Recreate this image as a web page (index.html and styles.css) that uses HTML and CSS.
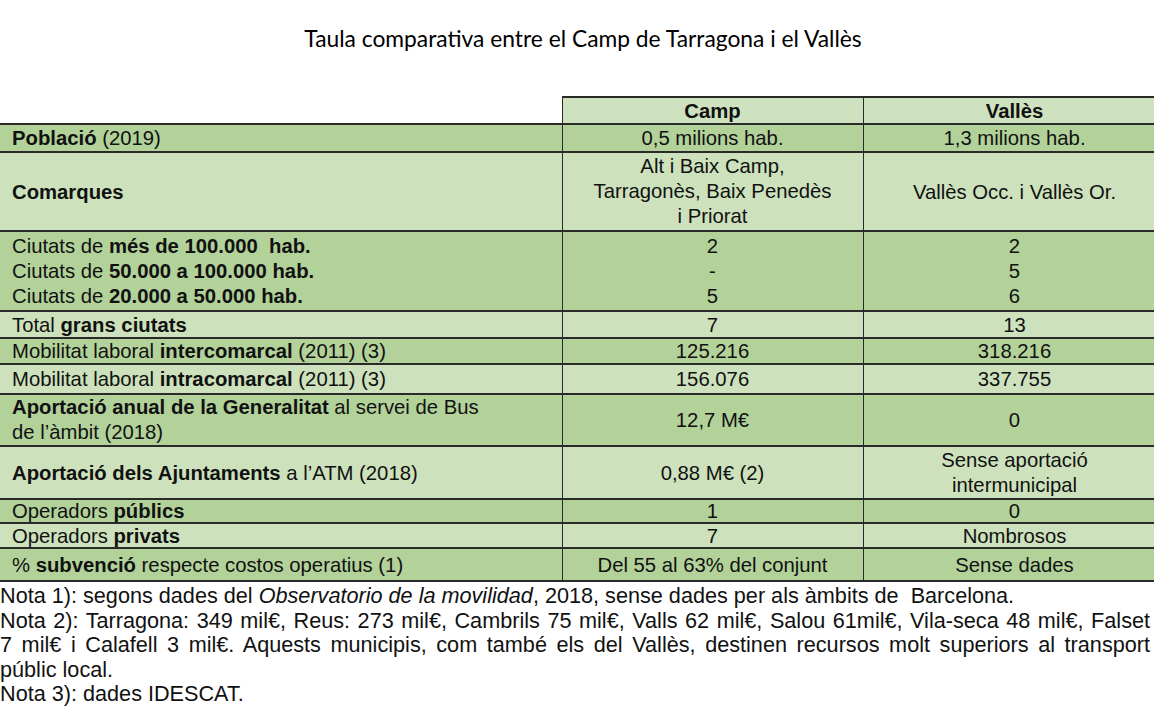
FILE: index.html
```html
<!DOCTYPE html>
<html lang="ca">
<head>
<meta charset="utf-8">
<title>Taula comparativa</title>
<link rel="stylesheet" href="styles.css">
</head>
<body>
<div class="page">
  <h1 class="title">Taula comparativa entre el Camp de Tarragona i el Vallès</h1>
  <table class="cmp">
    <colgroup>
      <col class="c-lbl">
      <col class="c-val">
      <col class="c-val2">
    </colgroup>
    <thead>
      <tr class="r-head">
        <th class="blank"></th>
        <th class="head">Camp</th>
        <th class="head">Vallès</th>
      </tr>
    </thead>
    <tbody>
      <tr class="dark r-28">
        <td class="lbl"><b>Població</b> (2019)</td>
        <td>0,5 milions hab.</td>
        <td>1,3 milions hab.</td>
      </tr>
      <tr class="light r-79">
        <td class="lbl"><b>Comarques</b></td>
        <td class="ml">Alt i Baix Camp,<br>Tarragonès, Baix Penedès<br>i Priorat</td>
        <td>Vallès Occ. i Vallès Or.</td>
      </tr>
      <tr class="dark r-80">
        <td class="lbl ml">Ciutats de <b>més de 100.000&nbsp; hab.</b><br>Ciutats de <b>50.000 a 100.000 hab.</b><br>Ciutats de <b>20.000 a 50.000 hab.</b></td>
        <td class="ml">2<br>-<br>5</td>
        <td class="ml">2<br>5<br>6</td>
      </tr>
      <tr class="light r-27">
        <td class="lbl">Total <b>grans ciutats</b></td>
        <td>7</td>
        <td>13</td>
      </tr>
      <tr class="dark r-26">
        <td class="lbl">Mobilitat laboral <b>intercomarcal</b> (2011) (3)</td>
        <td>125.216</td>
        <td>318.216</td>
      </tr>
      <tr class="light r-30">
        <td class="lbl">Mobilitat laboral <b>intracomarcal</b> (2011) (3)</td>
        <td>156.076</td>
        <td>337.755</td>
      </tr>
      <tr class="dark r-52">
        <td class="lbl ml"><b>Aportació anual de la Generalitat</b> al servei de Bus<br>de l’àmbit (2018)</td>
        <td>12,7 M€</td>
        <td>0</td>
      </tr>
      <tr class="light r-53">
        <td class="lbl"><b>Aportació dels Ajuntaments</b> a l’ATM (2018)</td>
        <td>0,88 M€ (2)</td>
        <td class="ml">Sense aportació<br>intermunicipal</td>
      </tr>
      <tr class="dark r-24">
        <td class="lbl">Operadors <b>públics</b></td>
        <td>1</td>
        <td>0</td>
      </tr>
      <tr class="light r-25">
        <td class="lbl">Operadors <b>privats</b></td>
        <td>7</td>
        <td>Nombrosos</td>
      </tr>
      <tr class="dark r-33">
        <td class="lbl">% <b>subvenció</b> respecte costos operatius (1)</td>
        <td>Del 55 al 63% del conjunt</td>
        <td>Sense dades</td>
      </tr>
    </tbody>
  </table>
  <div class="notes">
    <p>Nota 1): segons dades del <i>Observatorio de la movilidad</i>, 2018, sense dades per als àmbits de&nbsp; Barcelona.</p>
    <p class="just">Nota 2): Tarragona: 349 mil€, Reus: 273 mil€, Cambrils 75 mil€, Valls 62 mil€, Salou 61mil€, Vila-seca 48 mil€, Falset 7&nbsp;mil€ i Calafell 3 mil€. Aquests municipis, com també els del Vallès, destinen recursos molt superiors al transport públic&nbsp;local.</p>
    <p>Nota 3): dades IDESCAT.</p>
  </div>
</div>
</body>
</html>
```

FILE: styles.css
```css
html, body {
  margin: 0;
  padding: 0;
  background: #ffffff;
  overflow: hidden;
}

.page {
  width: 1166px;
  font-family: "Liberation Sans", Arial, sans-serif;
  color: #111;
}

.title {
  margin: 0;
  padding-top: 24px;
  height: 96px;
  box-sizing: border-box;
  text-align: center;
  font-family: Lato, "Open Sans", sans-serif;
  font-weight: 400;
  font-size: 22.8px;
  line-height: 28px;
  color: #000;
}

.cmp {
  border-collapse: collapse;
  width: 1166px;
  table-layout: fixed;
  font-size: 20.3px;
  line-height: 22px;
}

.c-lbl { width: 562px; }
.c-val { width: 301px; }
.c-val2 { width: 303px; }

.cmp th,
.cmp td {
  padding: 0 4px;
  border-top: 2px solid #2a2a2a;
  border-bottom: 2px solid #2a2a2a;
  border-left: 1px solid #2a2a2a;
  border-right: 1px solid #2a2a2a;
  text-align: center;
  vertical-align: middle;
}

.cmp td.ml {
  line-height: 25px;
}

.cmp th.blank {
  border: none;
  border-bottom: 2px solid #2a2a2a;
  background: transparent;
}

.cmp th.head {
  background: #cfe2bf;
  font-weight: 700;
}

.cmp td.lbl {
  text-align: left;
  padding-left: 12px;
  border-left: none;
}

.dark td { background: #b2d29a; }
.light td { background: #cde1bc; }

.r-head { height: 27px; }
.r-24 { height: 24px; }
.r-25 { height: 25px; }
.r-26 { height: 26px; }
.r-27 { height: 27px; }
.r-28 { height: 28px; }
.r-30 { height: 30px; }
.r-33 { height: 33px; }
.r-52 { height: 52px; }
.r-53 { height: 53px; }
.r-79 { height: 79px; }
.r-80 { height: 80px; }

.notes {
  width: 1150px;
  padding-top: 2px;
  font-size: 21.65px;
  line-height: 24.5px;
  color: #111;
}

.notes p {
  margin: 0;
}

.notes .just {
  text-align: justify;
}
```
